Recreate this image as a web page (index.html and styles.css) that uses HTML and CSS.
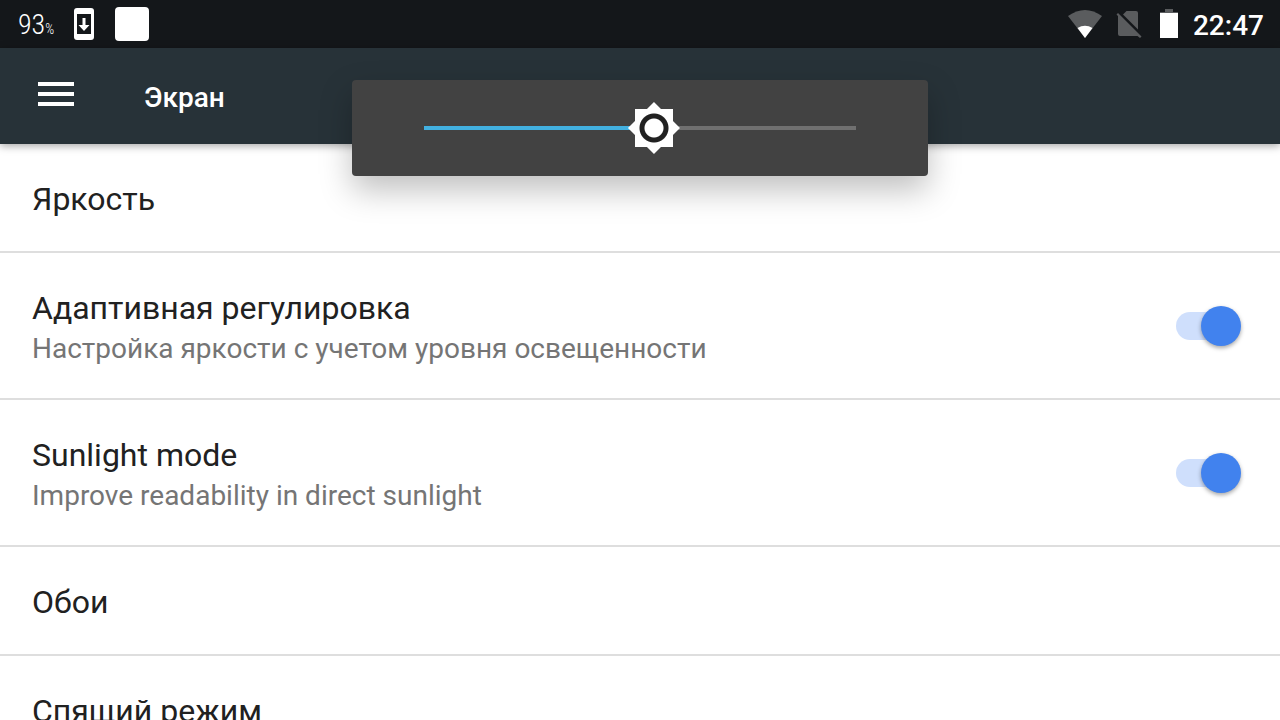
FILE: index.html
```
<!DOCTYPE html>
<html lang="ru">
<head>
    <meta charset="UTF-8">
    <meta name="viewport" content="width=device-width, initial-scale=1.0">
    <title>Экран</title>
    <link rel="stylesheet" href="styles.css">
</head>
<body>
    <div class="status-bar">
        <div class="status-left">
            <span class="battery-level">93<small>%</small></span>
            <svg class="icon-update" width="20" height="32" viewBox="0 0 20 32">
                <rect width="20" height="32" rx="3" fill="#fff"/>
                <rect x="3" y="6" width="14" height="20" fill="#14171a"/>
                <path d="M8.5 10h3v7H15.500l-5.500 6-5.500-6h4z" fill="#fff"/>
            </svg>
            <span class="app-icon"></span>
        </div>
        <div class="status-right">
            <svg width="36" height="30" viewBox="0 0 36 30">
                <path d="M1 7Q18-5 35 7L18 29z" fill="#5a5c5e"/>
                <path d="M10.500 19Q18 14.500 25.500 19L18 29z" fill="#fff"/>
            </svg>
            <svg class="icon-sim" width="28" height="30" viewBox="0 0 28 30">
                <path d="M11.500 2H21q2 0 2 2v16.500L8 5.500z" fill="#5a5c5e"/>
                <path d="M1.500 5.500L3 4l23.500 23.500-1.500 1.500-2.500-2H5q-2 0-2-2V7z" fill="#5a5c5e"/>
            </svg>
            <svg class="icon-battery" width="20" height="30" viewBox="0 0 20 30">
                <path d="M6 0h8v3h5v2H1V3h5z" fill="#5a5c5e"/>
                <rect x="1" y="4" width="18" height="25" fill="#fff"/>
            </svg>
            <span class="clock">22:47</span>
        </div>
    </div>

    <header class="toolbar">
        <button class="menu-button" type="button" aria-label="Меню">
            <span></span>
            <span></span>
            <span></span>
        </button>
        <h1>Экран</h1>
    </header>

    <!-- регулятор яркости поверх настроек -->
    <div class="brightness-panel">
        <input class="brightness" type="range" min="0" max="432" value="230" aria-label="Яркость">
    </div>

    <main class="settings">
        <div class="row">
            <div class="title">Яркость</div>
        </div>
        <div class="row row-switch">
            <label for="adaptive">
                <span class="title">Адаптивная регулировка</span>
                <span class="summary">Настройка яркости с учетом уровня освещенности</span>
            </label>
            <input class="switch" type="checkbox" id="adaptive" checked>
        </div>
        <div class="row row-switch">
            <label for="sunlight">
                <span class="title">Sunlight mode</span>
                <span class="summary">Improve readability in direct sunlight</span>
            </label>
            <input class="switch" type="checkbox" id="sunlight" checked>
        </div>
        <div class="row">
            <div class="title">Обои</div>
        </div>
        <div class="row">
            <div class="title">Спящий режим</div>
        </div>
    </main>
</body>
</html>
```
FILE: styles.css
```
* {
    box-sizing: border-box;
}

body {
    margin: 0;
    height: 100vh;
    overflow: hidden;
    position: relative;
    font-family: Roboto, "Noto Sans", sans-serif;
    background: #fff;
    color: #212121;
}

/* строка состояния */
.status-bar {
    display: flex;
    justify-content: space-between;
    align-items: center;
    height: 48px;
    padding: 0 16px 0 18px;
    background: #14171a;
    color: #fff;
}

.status-left,
.status-right {
    display: flex;
    align-items: center;
}

.battery-level {
    width: 56px;
    font-family: "Roboto Condensed", Roboto, sans-serif;
    font-size: 28px;
    font-weight: 300;
    white-space: nowrap;
}

.battery-level small {
    font-size: 14px;
}

.app-icon {
    width: 34px;
    height: 34px;
    margin-left: 21px;
    border-radius: 4px;
    background: #fff;
}

.icon-sim {
    margin-left: 12px;
}

.icon-battery {
    margin: 0 14px 0 16px;
}

.clock {
    padding-top: 3px;
    font-size: 28px;
    font-weight: 500;
    line-height: 45px;
}

/* шапка */
.toolbar {
    display: flex;
    align-items: center;
    position: relative;
    height: 96px;
    padding-left: 32px;
    background: #273238;
    box-shadow: 0 2px 8px rgba(0, 0, 0, 0.35);
}

.menu-button {
    display: flex;
    flex-direction: column;
    gap: 6px;
    width: 48px;
    height: 48px;
    padding: 10px 6px;
    border: 0;
    background: none;
}

.menu-button span {
    width: 36px;
    height: 4px;
    background: #fff;
}

.toolbar h1 {
    margin: 0 0 0 64px;
    padding-top: 2px;
    font-size: 28px;
    font-weight: 500;
    color: #fff;
}

/* панель яркости */
.brightness-panel {
    display: flex;
    align-items: center;
    position: absolute;
    top: 80px;
    left: 50%;
    width: 45%;
    height: 96px;
    padding: 0 46px;
    transform: translateX(-50%);
    border-radius: 4px;
    background: #424242;
    box-shadow: 0 14px 32px rgba(0, 0, 0, 0.25);
}

.brightness {
    -webkit-appearance: none;
    appearance: none;
    width: 100%;
    height: 52px;
    margin: 0;
    background:
        linear-gradient(#42b0e0, #42b0e0) 26px center / calc(50% - 12px) 4px no-repeat,
        linear-gradient(#707070, #707070) center / calc(100% - 52px) 4px no-repeat;
}

.brightness::-webkit-slider-thumb {
    -webkit-appearance: none;
    width: 52px;
    height: 52px;
    background: radial-gradient(circle, #fff 9px, #212121 10px, #212121 14px, #fff 15px);
    clip-path: polygon(26px 0, 33px 7px, 45px 7px, 45px 19px, 52px 26px, 45px 33px, 45px 45px, 33px 45px, 26px 52px, 19px 45px, 7px 45px, 7px 33px, 0 26px, 7px 19px, 7px 7px, 19px 7px);
}

/* список настроек */
.row {
    padding: 36px 32px 33px;
    border-bottom: 2px solid #dedede;
}

.row-switch {
    display: flex;
    justify-content: space-between;
    align-items: center;
    padding: 0 39px 0 32px;
}

.row-switch label {
    padding: 36px 0 30px;
}

.title,
.summary {
    display: block;
    line-height: 38px;
}

.title {
    font-size: 32px;
}

.summary {
    margin-top: 3px;
    font-size: 28px;
    color: #757575;
}

.switch {
    -webkit-appearance: none;
    appearance: none;
    display: flex;
    align-items: center;
    justify-content: flex-end;
    width: 65px;
    height: 28px;
    margin: 0;
    border-radius: 14px;
    background: linear-gradient(90deg, #cfdffc 50px, transparent 50px);
}

.switch::before {
    content: "";
    flex: none;
    width: 40px;
    height: 40px;
    border-radius: 50%;
    background: #4182ee;
    box-shadow: 0 2px 4px rgba(0, 0, 0, 0.35);
}

.switch:not(:checked) {
    justify-content: flex-start;
}
```
